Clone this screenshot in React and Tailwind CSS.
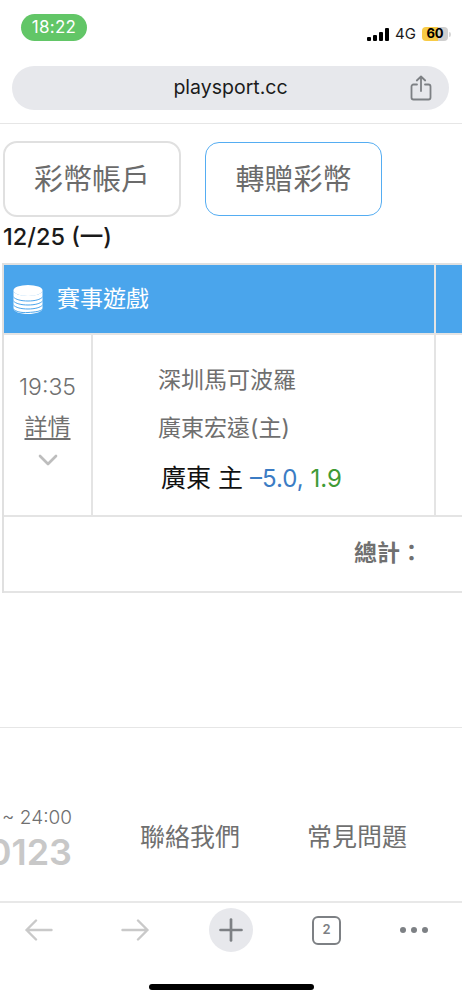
import { ChevronDown, Plus } from "lucide-react";

const cjk = "font-['Inter','Noto_Sans_CJK_TC',sans-serif]";

function ShareIcon() {
  return (
    <svg className="w-[22px] h-[26px] text-[#7d8084]" viewBox="0 0 22 26" fill="none" stroke="currentColor" strokeWidth="1.8" strokeLinecap="round" strokeLinejoin="round">
      <path d="M7 9.5H3.5a2 2 0 0 0-2 2V22.5a2 2 0 0 0 2 2h15a2 2 0 0 0 2-2V11.5a2 2 0 0 0-2-2H15" />
      <path d="M11 16V1.5M6.8 5.5 11 1.5l4.2 4" />
    </svg>
  );
}

function CoinsIcon() {
  return (
    <svg className="w-[30px] h-[30px]" viewBox="0 0 30 30" fill="none">
      <ellipse cx="15" cy="6.5" rx="14.5" ry="5.5" fill="white" />
      <path d="M.5 6.5v18c0 3 6.5 5.5 14.5 5.5s14.5-2.500 14.500-5.500v-18c0 3-6.500 5.500-14.500 5.500S.5 9.500.5 6.500z" fill="white" />
      <path d="M.5 13c2 2.500 7.500 4 14.500 4s12.500-1.500 14.500-4M.5 17c2 2.500 7.500 4 14.500 4s12.500-1.500 14.500-4M.5 21c2 2.500 7.500 4 14.500 4s12.500-1.500 14.500-4M.5 25c2 2.500 7.500 4 14.500 3.500s12.500-1 14.500-3.500" stroke="#4aa5ec" strokeWidth="1" />
    </svg>
  );
}

// thin browser arrow, flipped for the forward button
function NavArrow({ flip }) {
  return (
    <svg className={`w-[28px] h-[22px] text-[#c9c9c9] ${flip ? "rotate-180" : ""}`} viewBox="0 0 28 22" fill="none" stroke="currentColor" strokeWidth="2.4" strokeLinecap="round" strokeLinejoin="round">
      <path d="M1.500 11H26.500M11 1.500 1.500 11 11 20.500" />
    </svg>
  );
}

function StatusBar() {
  return (
    <div className="h-[66px] flex justify-between pl-[21px] pr-[11px]">
      <div className="mt-[14px] w-[66px] h-[27px] rounded-full bg-[#62c667] text-white text-[17px] flex items-center justify-center font-['Inter',sans-serif] tracking-[0.3px]">
        18:22
      </div>
      <div className="mt-[27px] h-[14px] flex items-center">
        <div className="flex items-end gap-[2px] h-[13px]">
          <div className="w-[4px] h-[4px] rounded-[1px] bg-black" />
          <div className="w-[4px] h-[6px] rounded-[1px] bg-black" />
          <div className="w-[4px] h-[9px] rounded-[1px] bg-black" />
          <div className="w-[4px] h-[13px] rounded-[1px] bg-black" />
        </div>
        <span className="ml-[6px] text-[15px] text-[#1a1a1a] font-['Inter',sans-serif]">4G</span>
        <div className="ml-[6px] w-[26px] h-[14px] rounded-[4px] bg-[linear-gradient(90deg,#f8cb46_0,#f8cb46_60%,#cfcfcf_60%,#cfcfcf_100%)] text-[13px] font-bold text-black flex items-center justify-center font-['Inter',sans-serif]">
          60
        </div>
        <div className="ml-[1px] w-[2px] h-[5px] rounded-r-sm bg-[#d8d8d8]" />
      </div>
    </div>
  );
}

function BottomBar() {
  return (
    <div className="h-[98px] border-t-2 border-[#e8e8e8] flex flex-col">
      <div className="mt-[5px] relative h-[44px] flex items-center">
        <div className="absolute left-[25px]">
          <NavArrow />
        </div>
        <div className="absolute left-[121px]">
          <NavArrow flip />
        </div>
        <div className="absolute left-[209px] w-[44px] h-[44px] rounded-full bg-[#e7e8ec] flex items-center justify-center">
          <Plus className="w-[36px] h-[36px] text-[#7d8084]" strokeWidth={1.8} />
        </div>
        <div className="absolute left-[312px] w-[29px] h-[29px] rounded-[6px] border-2 border-[#7d8084] text-[#7d8084] text-[13px] font-semibold flex items-center justify-center font-['Inter',sans-serif]">
          2
        </div>
        <div className="absolute left-[400px] flex gap-[5px]">
          <div className="w-[6px] h-[6px] rounded-full bg-[#7d8084]" />
          <div className="w-[6px] h-[6px] rounded-full bg-[#7d8084]" />
          <div className="w-[6px] h-[6px] rounded-full bg-[#7d8084]" />
        </div>
      </div>
      <div className="mt-[32px] mx-auto w-[165px] h-[6px] rounded-full bg-black" />
    </div>
  );
}

export default function App() {
  return (
    <div className={`w-[462px] h-[1000px] overflow-hidden bg-white flex flex-col ${cjk}`}>
      <StatusBar />

      <div className="h-[58px] border-b border-[#e6e6e6]">
        <div className="mx-3 w-[437px] h-[44px] rounded-full bg-[#e7e8ec] relative flex items-center justify-center text-[19.500px] text-[#1b1b1b] font-['Inter',sans-serif]">
          playsport.cc
          <div className="absolute right-[17px] top-[9px]">
            <ShareIcon />
          </div>
        </div>
      </div>

      <div className="mt-[17px] pl-[3px] flex items-center">
        <div className="w-[178px] h-[76px] rounded-[14px] border-2 border-[#e0e0e0] flex items-center justify-center text-[29px] text-[#6b6b6b] leading-none">
          彩幣帳戶
        </div>
        <div className="ml-[24px] w-[177px] h-[74px] rounded-[14px] border border-[#55adf2] flex items-center justify-center text-[29px] text-[#6b6b6b] leading-none">
          轉贈彩幣
        </div>
      </div>

      <div className="mt-[5px] pl-[3px] h-[30px] text-[23.500px] leading-[30px] font-medium text-[#1a1a1a]">
        12/25 (一)
      </div>

      <div className="mt-[11px] ml-[2px] w-[500px] border-t-2 border-l-2 border-[#e0e0e0]">
        <div className="flex h-[70px] border-b-2 border-[#e4e4e4]">
          <div className="w-[430px] bg-[#4aa5ec] flex items-center pl-[9px] text-white text-[23px]">
            <CoinsIcon />
            <span className="ml-[14px]">賽事遊戲</span>
          </div>
          <div className="flex-1 border-l-2 border-[#e4e4e4] bg-[#4aa5ec]" />
        </div>

        <div className="flex h-[182px] border-b-2 border-[#e4e4e4]">
          <div className="w-[89px] border-r-2 border-[#e4e4e4] flex flex-col items-center pt-[36px] text-[#707070]">
            <div className="text-[23px] leading-[32px] font-light">19:35</div>
            <div className="mt-[9px] text-[23px] leading-[30px] underline underline-offset-[3px]">詳情</div>
            <ChevronDown className="mt-[2px] w-[32px] h-[32px] text-[#bdbdbd]" strokeWidth={2} />
          </div>
          <div className="w-[341px] pl-[65px] pt-[27px] text-[23px] text-[#6f6f6f]">
            <div className="h-[36px] leading-[36px]">深圳馬可波羅</div>
            <div className="mt-[12px] h-[36px] leading-[36px]">廣東宏遠(主)</div>
            <div className="mt-[14px] pl-[3px] h-[36px] leading-[36px] text-[25px] whitespace-nowrap">
              <span className="text-[#111111]">廣東 主 </span>
              <span className="text-[24px] text-[#3b7cc4]">–5.0, </span>
              <span className="text-[24px] text-[#3f9a35]">1.9</span>
            </div>
          </div>
          <div className="flex-1 border-l-2 border-[#e4e4e4]" />
        </div>

        <div className="h-[76px] border-b-2 border-[#e4e4e4] flex items-center justify-end pr-[79px]">
          <div className="pb-[1px] text-[23px] font-bold text-[#707070]">總計：</div>
        </div>
      </div>

      <div className="mt-[134px] h-[174px] border-t border-[#e6e6e6] flex text-[#707070]">
        <div className="w-[72px] mt-[78px] shrink-0 flex flex-col items-end">
          <div className="text-[19px] leading-[24px] font-light whitespace-nowrap">~ 24:00</div>
          <div className="text-[36px] leading-[44px] font-semibold text-[#c8c8c8] whitespace-nowrap">0123</div>
        </div>
        <div className="ml-[68px] mt-[93px] text-[25px] leading-[32px] whitespace-nowrap">聯絡我們</div>
        <div className="ml-[67px] mt-[93px] text-[25px] leading-[32px] whitespace-nowrap">常見問題</div>
      </div>

      <BottomBar />
    </div>
  );
}
